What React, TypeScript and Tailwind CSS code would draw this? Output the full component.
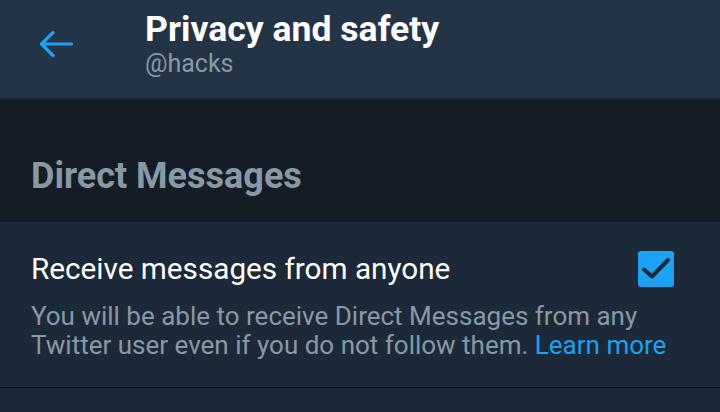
import React from "react";

function BackArrow() {
  return (
    <svg width="34" height="28" viewBox="0 0 34 28" fill="none" aria-hidden>
      <path
        d="M32.5 14H3.5M14 2.5L2.5 14L14 25.5"
        stroke="#1da1f2"
        strokeWidth="3.2"
        strokeLinecap="round"
        strokeLinejoin="round"
      />
    </svg>
  );
}

function CheckBox() {
  return (
    <div className="flex h-[36px] w-[36px] shrink-0 items-center justify-center rounded-[3px] bg-[#1da1f2]">
      <svg width="36" height="36" viewBox="0 0 36 36" fill="none" aria-hidden>
        <path
          d="M6 18.5L14 25.5L30 9"
          stroke="#1c2938"
          strokeWidth="4"
          strokeLinecap="round"
          strokeLinejoin="round"
        />
      </svg>
    </div>
  );
}

export default function App() {
  return (
    <div className="h-[412px] w-[720px] overflow-hidden bg-[#1c2938] font-['Roboto',sans-serif]">
      <header className="flex h-[100px] items-start border-b-2 border-[#1b2632] bg-[#243447] pl-[39px]">
        <div className="mt-[30px]">
          <BackArrow />
        </div>
        <div className="ml-[72px] pt-[9px]">
          <h1 className="text-[35.6px] font-bold leading-[40px] text-white">Privacy and safety</h1>
          <p className="text-[25px] leading-[30px] text-[#8899a6]">@hacks</p>
        </div>
      </header>

      <div className="bg-[#141d26] px-[31px] pb-[25px] pt-[55px]">
        <h2 className="text-[36px] font-bold leading-[42px] text-[#8899a6]">Direct Messages</h2>
      </div>

      <section className="border-b border-[#0b1118] px-[31px] pb-[27px] pt-[29px]">
        <div className="flex items-center justify-between pr-[15px]">
          <span className="text-[29.7px] leading-[36px] text-white">Receive messages from anyone</span>
          <CheckBox />
        </div>
        <p className="mt-[15px] text-[26px] leading-[29px] text-[#8899a6]">
          You will be able to receive Direct Messages from any
          <br />
          Twitter user even if you do not follow them.{" "}
          <span className="text-[#1da1f2]">Learn more</span>
        </p>
      </section>
    </div>
  );
}
